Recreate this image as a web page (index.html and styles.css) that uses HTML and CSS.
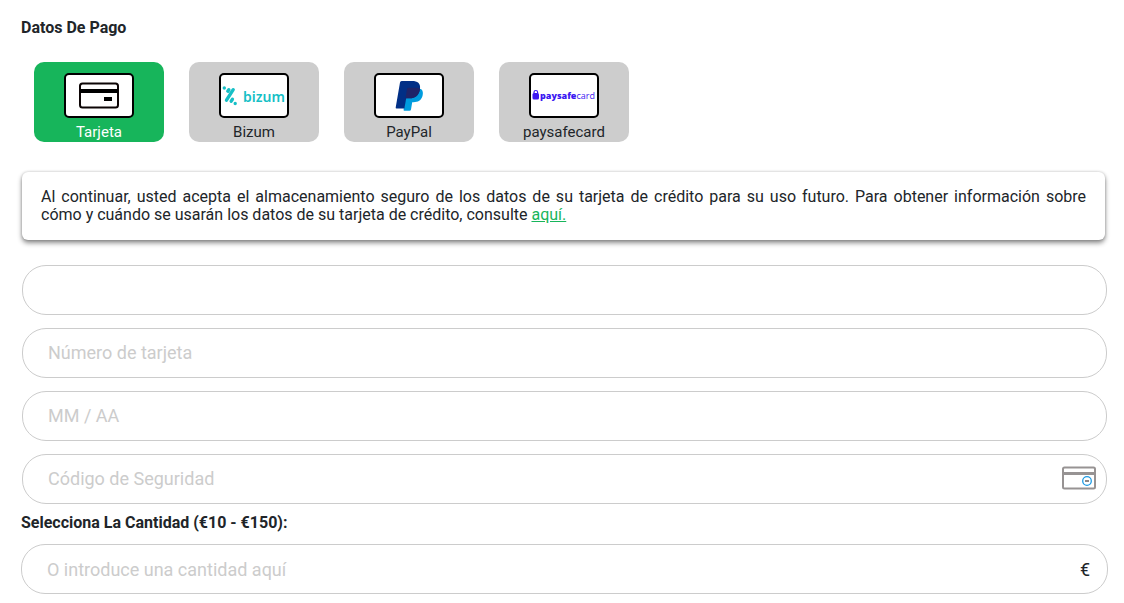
FILE: index.html
```html
<!DOCTYPE html>
<html lang="es">
<head>
<meta charset="utf-8">
<meta name="viewport" content="width=device-width, initial-scale=1">
<title>Datos De Pago</title>
<link rel="stylesheet" href="styles.css">
</head>
<body>
<main class="payment">
  <h2 class="title">Datos De Pago</h2>

  <div class="methods">
    <button type="button" class="method method-active" aria-pressed="true">
      <span class="logo">
        <svg width="66" height="41" viewBox="0 0 66 41" aria-hidden="true">
          <rect x="14" y="8.5" width="38" height="24" rx="2.5" fill="#fff" stroke="#0c0505" stroke-width="2"/>
          <path d="M14 14h38v4H14z" fill="#000"/>
          <path d="M38 22h8v4h-8z" fill="#000"/>
        </svg>
      </span>
      <span class="method-name">Tarjeta</span>
    </button>
    <button type="button" class="method" aria-pressed="false">
      <span class="logo">
        <svg width="66" height="41" viewBox="0 0 66 41" aria-hidden="true">
          <g stroke="#16bfc6" stroke-width="3.400" stroke-linecap="round" fill="none">
            <path d="M12.200 14.700 5.500 25.200M7.800 14.700 6.800 16.200M11.400 24.300 10.200 26.200"/>
            <path d="M3.300 13v.01M14.200 28.500v.01"/>
          </g>
          <text class="bizum-word" x="22" y="27">bizum</text>
        </svg>
      </span>
      <span class="method-name">Bizum</span>
    </button>
    <button type="button" class="method" aria-pressed="false">
      <span class="logo">
        <svg width="66" height="41" viewBox="0 0 66 41" aria-hidden="true">
          <path d="M31 14h14c2 1.500 2.300 4 1.500 7-1.300 4.500-4.500 6.200-9 6.200h-1.300L35 34.500q-.2 1.300-1.500 1.300h-5.200q-.9 0-.7-1z" fill="#009cde"/>
          <path d="M24 7.500Q24.200 6 25.700 6H36c5.500 0 8.800 2.300 8 8-.9 6.300-4.700 9.300-10.500 9.300h-3.300L28.400 33.500H20.500q-1 0-.8-1z" fill="#012f86"/>
          <path d="M31 14q.2-1.200 1.500-1.200h8.200q2 0 3.400.6c-.9 6.700-4.700 9.900-10.600 9.900h-4z" fill="#1f2468"/>
        </svg>
      </span>
      <span class="method-name">PayPal</span>
    </button>
    <button type="button" class="method" aria-pressed="false">
      <span class="logo">
        <svg width="66" height="41" viewBox="0 0 66 41" aria-hidden="true">
          <rect x="1.500" y="18" width="6.500" height="6.500" rx="1.500" fill="#3b17f2"/>
          <path d="M3 18.500v-1.300q0-1.700 1.800-1.700t1.800 1.700v1.300" fill="none" stroke="#3b17f2" stroke-width="1.200"/>
          <text class="safe-word" x="9" y="24"><tspan class="safe-bold">paysafe</tspan>card</text>
        </svg>
      </span>
      <span class="method-name">paysafecard</span>
    </button>
  </div>

  <p class="notice">Al continuar, usted acepta el almacenamiento seguro de los datos de su tarjeta de crédito para su uso futuro. Para obtener información sobre cómo&nbsp;y cuándo se usarán los datos de su tarjeta de crédito, consulte <a class="notice-link" href="#">aquí.</a></p>

  <form class="form">
    <div class="card-fields">
      <input class="field" type="text" aria-label="Titular de la tarjeta">
      <input class="field" type="text" placeholder="Número de tarjeta" aria-label="Número de tarjeta">
      <input class="field" type="text" placeholder="MM / AA" aria-label="MM / AA">
      <div class="field field-group">
        <input class="field-input" type="text" placeholder="Código de Seguridad" aria-label="Código de Seguridad">
        <svg class="cvv" width="34" height="24" viewBox="0 0 34 24" aria-hidden="true">
          <rect x="1" y="1.500" width="32" height="21" rx="1.500" fill="#fff" stroke="#979393" stroke-width="2"/>
          <path d="M1 6h32v3H1z" fill="#979393"/>
          <circle cx="25" cy="15" r="4.300" fill="#fff" stroke="#1e9be4" stroke-width="1.300"/>
          <path d="M23 14h4v2h-4z" fill="#8b8787"/>
        </svg>
      </div>
    </div>
    <label class="title amount-label" for="amount">Selecciona La Cantidad (€10 - €150):</label>
    <div class="field field-group amount">
      <input class="field-input" id="amount" type="text" placeholder="O introduce una cantidad aquí">
      <span class="currency">€</span>
    </div>
  </form>
</main>
</body>
</html>
```
FILE: styles.css
```css
* { box-sizing: border-box; }

body {
  margin: 0;
  background: #fff;
  color: #212529;
  font-family: Roboto, "Liberation Sans", sans-serif;
  font-size: 16px;
}

.payment { padding: 16px 16px 8px 21px; }

.title {
  display: block;
  margin: 0;
  font-size: 16px;
  font-weight: 700;
  line-height: 24px;
}

.methods {
  display: flex;
  flex-wrap: wrap;
  gap: 25px;
  margin: 22px 13px 30px;
}

.method {
  display: flex;
  flex-direction: column;
  align-items: center;
  width: 130px;
  height: 80px;
  padding: 11px 0 0;
  border: 0;
  border-radius: 10px;
  background: #cdcdcd;
  color: #212529;
  font: inherit;
  cursor: pointer;
}

.method-active { background: #17b55b; color: #fff; }

.logo {
  display: flex;
  border: 2px solid #000;
  border-radius: 5px;
  background: #fff;
}

.method-name { font-size: 15px; line-height: 28px; }

.bizum-word {
  fill: #16bfc6;
  font-family: "Noto Sans", sans-serif;
  font-size: 14px;
  font-weight: 600;
}

.safe-word {
  fill: #3b17f2;
  font-family: "Open Sans", sans-serif;
  font-size: 9px;
}

.safe-bold { font-weight: 800; }

.notice {
  margin: 0 3px 25px 1px;
  padding: 16px 19px;
  border-radius: 6px;
  box-shadow: 0 3px 5px rgba(0, 0, 0, .45), 0 0 3px rgba(0, 0, 0, .2);
  line-height: 18px;
  text-align: justify;
}

.notice-link { color: #17b55b; }

.card-fields {
  display: flex;
  flex-direction: column;
  gap: 13px;
  margin: 0 1px;
}

.field {
  width: 100%;
  height: 50px;
  padding: 0 25px;
  border: 1px solid #ccc;
  border-radius: 24px;
  background: #fff;
  color: #212529;
  font: inherit;
  font-size: 18px;
}

.card-fields .field { padding-bottom: 2px; }

.field-group {
  display: flex;
  align-items: center;
  padding-right: 10px;
}

.field-input {
  flex: 1;
  min-width: 0;
  padding: 0;
  border: 0;
  background: none;
  color: inherit;
  font: inherit;
}

.field::placeholder, .field-input::placeholder { color: #ccc; opacity: 1; }

.amount-label { margin: 7px 0 9px; }
.amount { padding-right: 17px; }
.currency { font-size: 18px; }
```
